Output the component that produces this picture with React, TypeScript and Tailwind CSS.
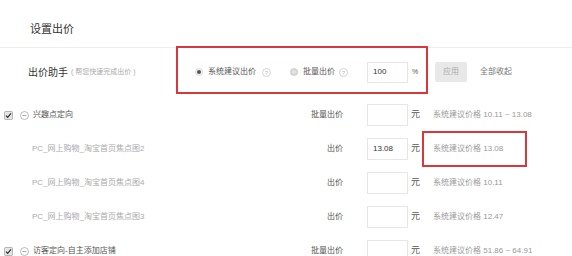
const font = { fontFamily: '"Liberation Sans", "Noto Sans CJK SC", sans-serif' }

function Help() {
  return (
    <svg width="9" height="9" viewBox="0 0 9 9" className="shrink-0">
      <circle cx="4.5" cy="4.5" r="4" fill="none" stroke="#c8c8c8" strokeWidth="0.8" />
      <text x="4.5" y="6.6" fontSize="6" textAnchor="middle" fill="#bbb" style={font}>?</text>
    </svg>
  )
}

function Radio({ on }: { on?: boolean }) {
  return (
    <svg width="8" height="8" viewBox="0 0 8 8" className="shrink-0">
      <circle cx="4" cy="4" r="3.6" fill={on ? '#f2f2f2' : '#d6d6d6'} stroke={on ? '#cfcfcf' : '#c4c4c4'} strokeWidth="0.6" />
      {on ? <circle cx="4" cy="4" r="2" fill="#555" /> : <circle cx="4" cy="4" r="1.8" fill="#e4e4e4" />}
    </svg>
  )
}

function Check() {
  return (
    <svg width="9" height="9" viewBox="0 0 9 9" className="shrink-0">
      <rect x="0.5" y="0.5" width="8" height="8" rx="1" fill="#e6e6e6" stroke="#999" strokeWidth="0.7" />
      <path d="M2 4.6 L3.7 6.3 L7 2.4" fill="none" stroke="#333" strokeWidth="1.3" />
    </svg>
  )
}

function Minus() {
  return (
    <svg width="9" height="9" viewBox="0 0 9 9" className="shrink-0">
      <circle cx="4.5" cy="4.5" r="4" fill="none" stroke="#aaa" strokeWidth="0.8" />
      <line x1="2.4" y1="4.5" x2="6.6" y2="4.5" stroke="#999" strokeWidth="0.8" />
    </svg>
  )
}

type Row = { group?: boolean; name: string; label: string; value?: string; price: string; boxed?: boolean }

const rows: Row[] = [
  { group: true, name: '兴趣点定向', label: '批量出价', price: '系统建议价格 10.11 ~ 13.08' },
  { name: 'PC_网上购物_淘宝首页焦点图2', label: '出价', value: '13.08', price: '系统建议价格 13.08', boxed: true },
  { name: 'PC_网上购物_淘宝首页焦点图4', label: '出价', price: '系统建议价格 10.11' },
  { name: 'PC_网上购物_淘宝首页焦点图3', label: '出价', price: '系统建议价格 12.47' },
  { group: true, name: '访客定向-自主添加店铺', label: '批量出价', price: '系统建议价格 51.86 ~ 64.91' },
]

export default function App() {
  return (
    <div className="w-[572px] h-[256px] overflow-hidden bg-white" style={font}>
      {/* Header */}
      <div className="h-[48px] pt-[12px] pl-[30px] flex items-center border-b border-[#eeeeee]">
        <span className="text-[11px] text-[#333]">设置出价</span>
      </div>

      {/* Bid assistant */}
      <div className="-mt-[2px] h-[48px] flex items-center">
        <div className="w-[176px] pl-[28px] pt-[4px] flex items-center whitespace-nowrap">
          <span className="text-[10px] text-[#333]">出价助手</span>
          <span className="ml-[3px] text-[7px] text-[#aaa]">( 帮您快速完成出价 )</span>
        </div>
        <div className="h-full w-[252px] border-2 border-[#d8373b] bg-white flex items-center pl-[17px] pt-[4px] whitespace-nowrap">
          <Radio on />
          <span className="ml-[5px] text-[8px] text-[#555]">系统建议出价</span>
          <span className="ml-[6px]"><Help /></span>
          <span className="ml-[19px]"><Radio /></span>
          <span className="ml-[5px] text-[8px] text-[#555]">批量出价</span>
          <span className="ml-[4px]"><Help /></span>
          <div className="ml-[19px] w-[41px] h-[21px] border border-[#e6e6e6] flex items-center pl-[5px] text-[8px] text-[#333]">100</div>
          <span className="ml-[4px] text-[7px] text-[#555]">%</span>
        </div>
        <div className="ml-[7px] pt-[4px] flex items-center whitespace-nowrap">
          <div className="w-[32px] h-[20px] rounded-[2px] bg-[#e8e8e8] flex items-center justify-center text-[8px] text-[#aaa]">应用</div>
          <span className="ml-[13px] text-[8px] text-[#777]">全部收起</span>
        </div>
      </div>

      {/* Rows */}
      <div className="mt-[4px]">
        {rows.map((r) => (
          <div key={r.name} className="h-[34px] flex items-center whitespace-nowrap">
            <div className="w-[270px] flex items-center">
              {r.group ? (
                <>
                  <span className="ml-[4px]"><Check /></span>
                  <span className="ml-[7px]"><Minus /></span>
                  <span className="ml-[4px] text-[8px] text-[#555]">{r.name}</span>
                </>
              ) : (
                <span className="ml-[32px] text-[8px] text-[#aaa]">{r.name}</span>
              )}
            </div>
            <div className="w-[73px] text-right text-[8px] text-[#555]">{r.label}</div>
            <div className="ml-[24px] w-[41px] h-[22px] border border-[#e6e6e6] flex items-center pl-[5px] text-[8px] text-[#333]">
              {r.value}
            </div>
            <span className="ml-[3px] text-[9px] text-[#555]">元</span>
            {r.boxed ? (
              <div className="ml-[2px] w-[105px] h-[36px] shrink-0 border-2 border-[#d8373b] flex items-center pl-[9px] text-[8px] text-[#999]">
                {r.price}
              </div>
            ) : (
              <span className="ml-[13px] text-[8px] text-[#999]">{r.price}</span>
            )}
          </div>
        ))}
      </div>
    </div>
  )
}
